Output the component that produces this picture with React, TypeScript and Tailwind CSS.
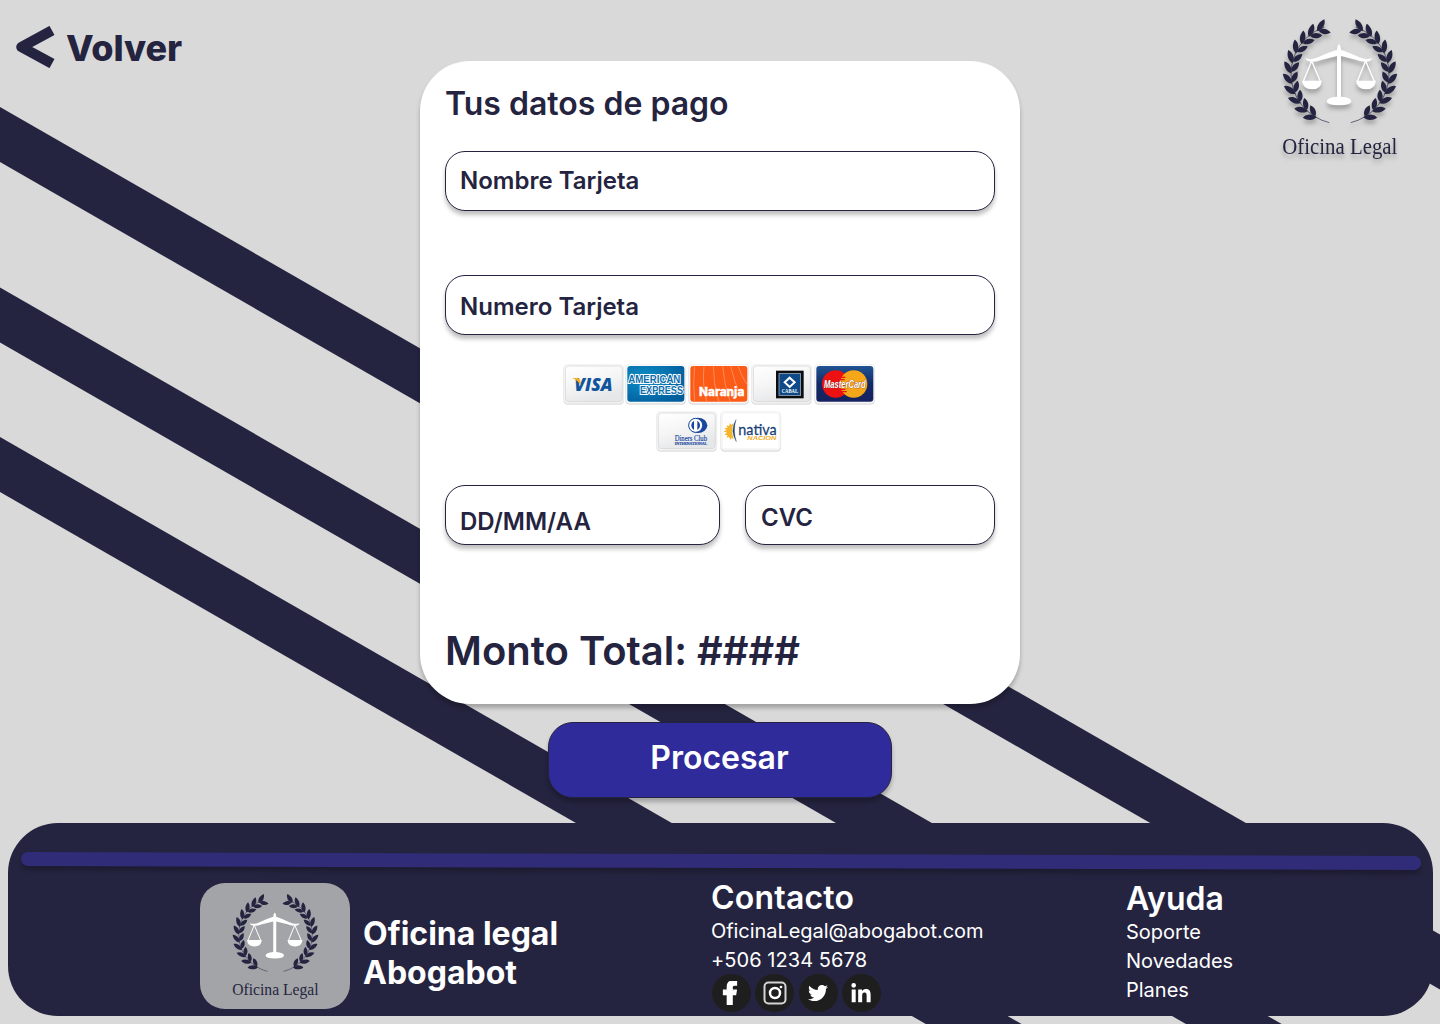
import type { ReactNode } from "react";
import { FaFacebookF, FaLinkedinIn, FaTwitter } from "react-icons/fa";

const NAVY = "#252440";

/** Angles (degrees from the bottom of the ring) at which leaf pairs grow. */
const LEAF_ANGLES = [29.5, 42, 54.5, 67, 79.5, 92, 104, 116.5, 129, 141, 153];

function Branch() {
  return (
    <g>
      <path d="M178 353 A150 150 0 0 1 63 205 A148 148 0 0 1 163 66" fill="none" stroke={NAVY} strokeWidth="2" />
      {LEAF_ANGLES.map((a) => {
        const r = (a * Math.PI) / 180;
        const x = 210 - 147 * Math.sin(r);
        const y = 208 + 147 * Math.cos(r);
        return (
          <g key={a} transform={`translate(${x} ${y}) rotate(${a - 180})`} fill={NAVY}>
            <path transform="rotate(-27)" d="M-2 0 C6 -11 24 -13 39 -4 C30 9 10 10 -2 0Z" />
            <path transform="rotate(31)" d="M3 0 C11 -10 28 -9 39 3 C26 13 11 10 3 0Z" />
          </g>
        );
      })}
    </g>
  );
}

function Logo({ className, shadow }: { className: string; shadow?: boolean }) {
  return (
    <svg viewBox="0 0 420 495" className={className} role="img" aria-label="Oficina Legal">
      <g className={shadow ? "drop-shadow-[0_12px_6px_rgba(0,0,0,0.25)]" : ""}>
        <Branch />
        <g transform="translate(420 0) scale(-1 1)">
          <Branch />
        </g>
        <g fill="#fff">
          <path d="M202 126 Q207 110 212 126 L213 134 Q238 142 268 157 Q288 166 306 160 Q304 169 290 170 Q276 171 258 164 L213 153 V275 Q244 277 244 289 Q243 301 207 301 Q171 301 170 289 Q171 277 201 275 V153 L156 164 Q138 171 122 170 Q110 169 106 160 Q126 166 144 157 Q174 142 201 134Z" />
          <path d="M96 227 H155 Q153 253 126 253 Q98 252 96 227Z" />
          <path d="M258 227 H318 Q315 253 288 253 Q260 252 258 227Z" />
          <path d="M125 168 L100 229 M125 168 L151 229 M287 168 L262 229 M287 168 L313 229" stroke="#fff" strokeWidth="4" />
        </g>
        <text x="37" y="447" textLength="345" lengthAdjust="spacingAndGlyphs" fontSize="70" fontFamily="'Liberation Serif', serif" fill={NAVY}>
          Oficina Legal
        </text>
      </g>
    </svg>
  );
}

function PayCard({ children, fill = "url(#silver)" }: { children: ReactNode; fill?: string }) {
  return (
    <svg viewBox="0 0 186 123" className="h-[41px] w-[62px] shrink-0">
      <defs>
        <linearGradient id="silver" x1="0" y1="0" x2="0.4" y2="1">
          <stop offset="0" stopColor="#fff" />
          <stop offset="0.5" stopColor="#f6f6f7" />
          <stop offset="1" stopColor="#e6e7e8" />
        </linearGradient>
      </defs>
      <rect x="1" y="2" width="182" height="120" rx="13" fill="#dedede" />
      <rect x="2" y="0" width="180" height="118" rx="13" fill="#fafafa" stroke="#ececec" strokeWidth="2" />
      <rect x="7" y="6" width="171" height="107" rx="9" fill={fill} stroke={fill === "url(#silver)" ? "#cfcfd1" : "none"} strokeWidth="2" />
      {children}
    </svg>
  );
}

const SANS = "'Open Sans', sans-serif";

function Visa() {
  return (
    <PayCard>
      <text x="34" y="80" textLength="115" lengthAdjust="spacingAndGlyphs" fontFamily={SANS} fontWeight="800" fontStyle="italic" fontSize="51" fill="#0f549d">
        VISA
      </text>
      <path d="M27 42 H43 Q51 43 52 50 L54 66 Q46 49 27 42Z" fill="#f6b01b" />
    </PayCard>
  );
}

function Amex() {
  return (
    <PayCard fill="url(#amex)">
      <defs>
        <radialGradient id="amex" cx="0.3" cy="0.35" r="0.8">
          <stop offset="0" stopColor="#0f8fc7" />
          <stop offset="1" stopColor="#005d9c" />
        </radialGradient>
      </defs>
      <g fontFamily="'Liberation Sans', sans-serif" fontWeight="700" fontSize="30" fill="#0a6cab" stroke="#fff" strokeWidth="6" strokeLinejoin="miter" paintOrder="stroke">
        <text x="10" y="56" textLength="156" lengthAdjust="spacingAndGlyphs">AMERICAN</text>
        <text x="45" y="89" textLength="129" lengthAdjust="spacingAndGlyphs">EXPRESS</text>
      </g>
    </PayCard>
  );
}

function Naranja() {
  return (
    <PayCard fill="#fb5b16">
      <path d="M20 7 Q14 60 20 112 M48 7 Q42 60 56 112 M76 7 Q76 60 92 112 M104 7 Q108 60 126 112 M128 7 Q138 50 158 100 M150 7 Q160 35 176 60" fill="none" stroke="#ffa37a" strokeWidth="2" />
      <text x="33" y="97" textLength="136" lengthAdjust="spacingAndGlyphs" fontFamily="Inter, sans-serif" fontWeight="800" fontSize="35" fill="#fff" stroke="#fff">
        Naranja
      </text>
    </PayCard>
  );
}

function Cabal() {
  return (
    <PayCard>
      <rect x="75" y="20" width="83" height="83" fill="#0c0d11" />
      <rect x="84" y="29" width="65" height="65" fill="#0d4a87" stroke="#b9c9d9" strokeWidth="2" />
      <path d="M116 41 L131 55 L116 69 L101 55Z" fill="none" stroke="#fff" strokeWidth="6" />
      <text x="92" y="86" textLength="49" lengthAdjust="spacingAndGlyphs" fontFamily="'Liberation Serif', serif" fontWeight="700" fontSize="16" fill="#fff">
        CABAL
      </text>
    </PayCard>
  );
}

function Mastercard() {
  return (
    <PayCard fill="url(#mc)">
      <defs>
        <linearGradient id="mc" x1="0" y1="0" x2="0" y2="1">
          <stop offset="0" stopColor="#205493" />
          <stop offset="0.5" stopColor="#122a66" />
          <stop offset="1" stopColor="#17215f" />
        </linearGradient>
      </defs>
      <circle cx="65" cy="60" r="41" fill="#ee1111" />
      <circle cx="119" cy="60" r="41" fill="#f6a719" />
      <path d="M78 40 H94 M78 47 H92 M78 76 H94 M81 83 H98" stroke="#ee1111" strokeWidth="4" />
      <text x="30" y="71" textLength="125" lengthAdjust="spacingAndGlyphs" fontFamily="'Liberation Sans', sans-serif" fontWeight="700" fontStyle="italic" fontSize="31" fill="#fff" stroke="#7a2a22" strokeWidth="2" paintOrder="stroke">
        MasterCard
      </text>
    </PayCard>
  );
}

function Diners() {
  return (
    <PayCard>
      <ellipse cx="126" cy="43" rx="28" ry="23" fill="#17479e" />
      <circle cx="119" cy="43" r="21" fill="#fff" stroke="#17479e" strokeWidth="3" />
      <path d="M114 29 A16 16 0 0 0 114 57Z M124 29 A16 16 0 0 1 124 57Z" fill="#17479e" />
      <g fontFamily="'Liberation Serif', serif" fill="#17479e" stroke="#17479e" strokeWidth="0.5">
        <text x="56" y="89" textLength="97" lengthAdjust="spacingAndGlyphs" fontSize="23">Diners Club</text>
        <text x="56" y="102" textLength="97" lengthAdjust="spacingAndGlyphs" fontSize="12" fontWeight="700">INTERNATIONAL</text>
      </g>
    </PayCard>
  );
}

function Nativa() {
  return (
    <PayCard fill="#fff">
      <rect x="7" y="6" width="171" height="107" rx="9" fill="#fff" stroke="#eee" strokeWidth="2" />
      <path d="M40 36 L34 42 L29 36 L28 45 L19 43 L23 50 L12 52 L21 57 L10 61 L21 65 L13 71 L23 73 L19 80 L28 78 L30 87 L35 80 L41 86 Q33 61 40 36Z" fill="#f6b42c" />
      <path d="M48 26 Q29 58 49 92 Q38 59 48 26Z" fill="#173f76" stroke="#173f76" />
      <text x="55" y="72" textLength="115" lengthAdjust="spacingAndGlyphs" fontFamily="Lato, sans-serif" fontSize="48" fill="#173f76" stroke="#173f76" strokeWidth="0.8">
        nativa
      </text>
      <text x="82" y="88" textLength="87" lengthAdjust="spacingAndGlyphs" fontFamily="'Liberation Sans', sans-serif" fontWeight="700" fontStyle="italic" fontSize="16" fill="#f3ac22">
        NACION
      </text>
    </PayCard>
  );
}

function Field({ label, className }: { label: string; className: string }) {
  return (
    <div className={`flex h-[60px] items-center rounded-[20px] border border-[#252440] bg-white text-2xl font-semibold shadow-[0_4px_4px_rgba(0,0,0,0.25)] ${className}`}>
      {label}
    </div>
  );
}

function Social({ children }: { children: ReactNode }) {
  return <a className="flex h-[38px] w-[39px] items-center justify-center rounded-full bg-[#1f1e1f] text-white">{children}</a>;
}

export default function App() {
  return (
    <div className="relative isolate h-[1024px] w-[1440px] overflow-hidden bg-[#d9d9d9] font-['Inter',sans-serif] text-[#252440]">
      <svg className="absolute inset-0 -z-10" width="1440" height="1024" aria-hidden="true">
        <g fill={NAVY}>
          <path d="M0 107 L1440 934.5 V989.5 L0 162Z" />
          <path d="M0 287.5 L1440 1115 V1170 L0 342.5Z" />
          <path d="M0 437 L1440 1264.5 V1319.5 L0 492Z" />
        </g>
      </svg>

      <div className="grid h-[823px] grid-cols-[420px_600px_420px]">
        <a className="flex h-14 items-center self-start pt-[26px] pl-4">
          <svg width="39" height="42" viewBox="0 0 39 42" className="mt-[11px]" aria-hidden="true">
            <path d="M36 4.500 L5.500 21 L36 37.500" fill="none" stroke={NAVY} strokeWidth="10.500" strokeLinejoin="round" />
          </svg>
          <span className="mt-[13px] ml-[11px] text-4xl leading-[44px] font-extrabold tracking-[-0.1px]">Volver</span>
        </a>

        <main className="flex flex-col items-center pt-[61px]">
          <section className="h-[643px] w-full rounded-[50px] bg-white px-[25px] pt-[23px] shadow-[0_4px_4px_rgba(0,0,0,0.25)]">
            <h1 className="text-[32px] leading-10 font-semibold">Tus datos de pago</h1>
            <Field label="Nombre Tarjeta" className="mt-[27px] pl-3.5" />
            <Field label="Numero Tarjeta" className="mt-16 pt-[3px] pl-3.5" />
            <div className="mt-[29px] flex flex-col items-center gap-[6px]">
              <div className="flex gap-[0.8px] pr-[1.600px]">
                <Visa />
                <Amex />
                <Naranja />
                <Cabal />
                <Mastercard />
              </div>
              <div className="flex gap-[2px] pr-[2px]">
                <Diners />
                <Nativa />
              </div>
            </div>
            <div className="mt-[33px] flex gap-[25px]">
              <Field label="DD/MM/AA" className="w-[275px] pt-3.5 pl-3.5" />
              <Field label="CVC" className="w-[250px] pt-1.5 pl-[15px]" />
            </div>
            <p className="mt-20 text-[40px] leading-[52px] font-semibold">Monto Total: ####</p>
          </section>
          <button className="mt-[17.5px] mr-px h-[76px] w-[344px] rounded-[25px] border border-[#252440] bg-[#302b9a] pb-[3px] text-[32px] font-semibold text-white shadow-[0_4px_4px_rgba(0,0,0,0.25)]">
            Procesar
          </button>
        </main>

        <div className="flex justify-end pt-[5px] pr-[30px]">
          <Logo className="h-[165px] w-[140px]" shadow />
        </div>
      </div>

      <footer className="mr-[7px] ml-2 h-[193px] rounded-[50px] bg-[#252440] pt-[31px] text-white">
        <div className="ml-[13px] h-3.5 w-[1400px] rotate-[0.16deg] rounded-full bg-[#302c78] shadow-[0_4px_4px_rgba(0,0,0,0.25)]" />
        <div className="flex items-start pt-[15px] pl-48">
          <div className="flex h-[126px] w-[150px] items-start justify-center rounded-[25px] bg-[#a3a4a8]">
            <Logo className="h-[124px] w-[105px]" />
          </div>
          <p className="mt-[31px] ml-[13px] w-[348px] text-[32px] leading-[39px] font-bold">
            Oficina legal
            <br />
            Abogabot
          </p>
          <div className="w-[415px] text-xl leading-[29px]">
            <h2 className="-mt-px mb-[3px] text-[32px] leading-8 font-semibold tracking-[0.2px]">Contacto</h2>
            <p className="tracking-[-0.06px]">OficinaLegal@abogabot.com</p>
            <p className="tracking-[0.06px]">+506 1234 5678</p>
            <div className="-mt-px flex gap-[4.400px] pl-px">
              <Social>
                <FaFacebookF size={24} stroke="white" strokeWidth={30} className="mr-[3px]" />
              </Social>
              <Social>
                <svg width="24" height="24" viewBox="0 0 24 24" fill="none" stroke="#d4d4d4" strokeWidth="2">
                  <rect x="1.500" y="1.500" width="21" height="21" rx="4" />
                  <circle cx="12" cy="12" r="5" stroke="#fff" strokeWidth="2.500" />
                  <circle cx="18" cy="6" r="1.300" fill="#fff" stroke="none" />
                </svg>
              </Social>
              <Social>
                <FaTwitter size={20} />
              </Social>
              <Social>
                <FaLinkedinIn size={22} className="mt-0.5 mr-0.5" />
              </Social>
            </div>
          </div>
          <nav className="text-xl leading-[29px]">
            <h2 className="mb-[3px] text-[32px] leading-8 font-semibold">Ayuda</h2>
            <p>Soporte</p>
            <p>Novedades</p>
            <p>Planes</p>
          </nav>
        </div>
      </footer>
    </div>
  );
}
